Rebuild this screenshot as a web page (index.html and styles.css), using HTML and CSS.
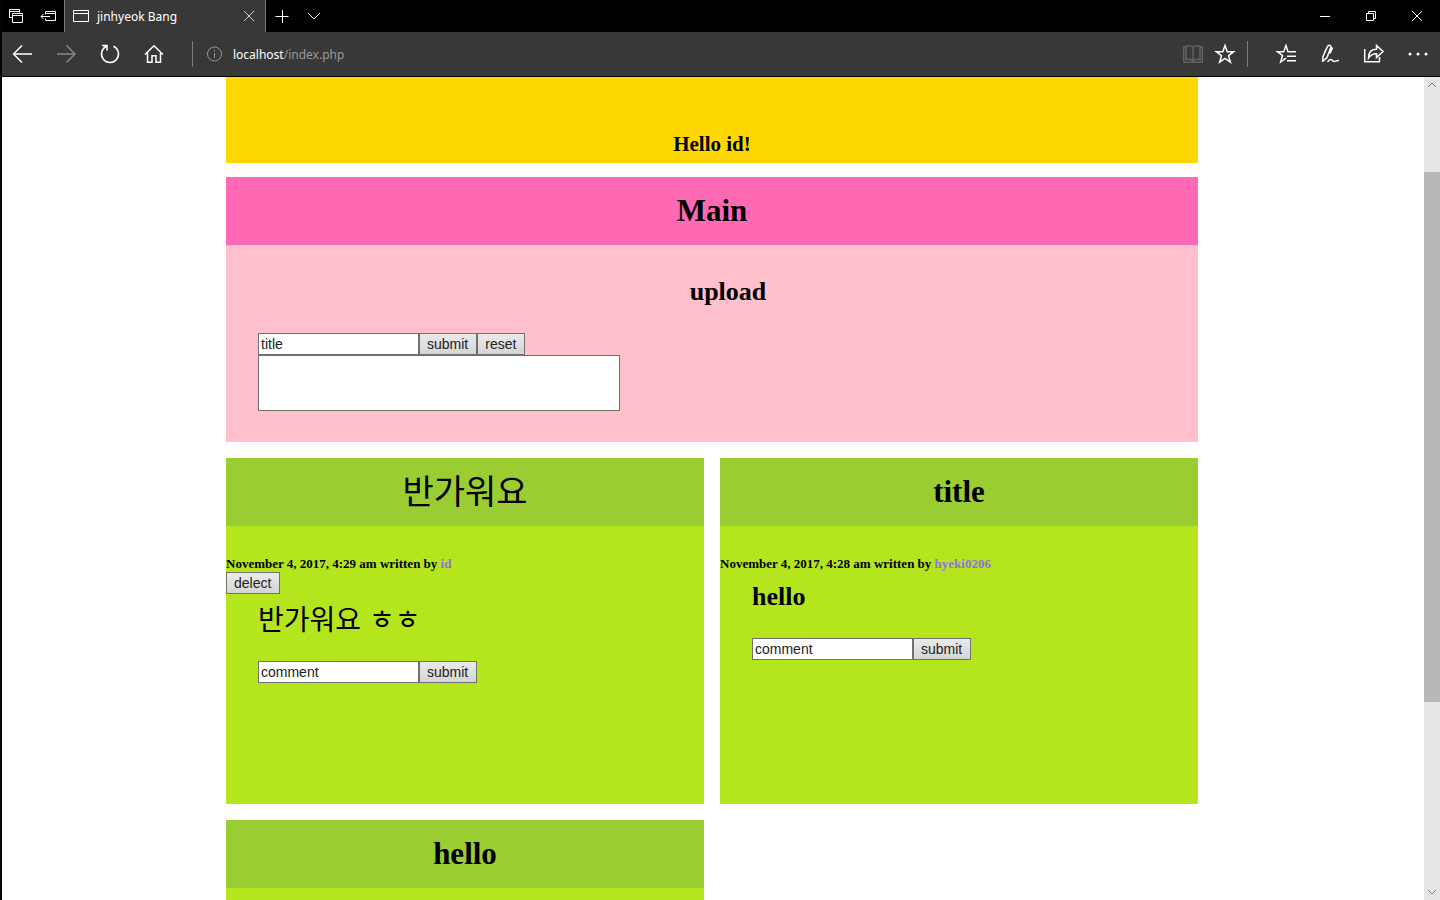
FILE: index.html
```html
<!DOCTYPE html>
<html lang="ko">
<head>
<meta charset="utf-8">
<title>jinhyeok Bang</title>
<link rel="stylesheet" href="styles.css">
</head>
<body>
<div class="window">
  <div class="tabbar">
    <button class="icon-btn" aria-label="Tabs set aside"><svg width="16" height="16" viewBox="0 0 16 16"><path d="M3 9.500H.5V1.500H10.500V4.500M.5 3.500H10.500M3.500 5.500H13.500V14.500H3.500ZM3.500 7.500H13.500"/></svg></button>
    <button class="icon-btn" aria-label="Set tabs aside"><svg width="18" height="16" viewBox="0 0 18 16"><path d="M5.500 6.500V3.500H15.500V12.500H5.500V10.500M5.500 5.500H15.500M1 8.500H10M3.500 6L1 8.500L3.500 11"/></svg></button>
    <div class="tab">
      <svg width="16" height="14" viewBox="0 0 16 14"><path d="M.5 1.500H15.500V12.500H.5ZM.5 4.500H15.500"/></svg>
      <span class="tab-title">jinhyeok Bang</span>
      <button class="tab-close" aria-label="Close tab"><svg width="12" height="12" viewBox="0 0 12 12"><path d="M1 1L11 11M11 1L1 11"/></svg></button>
    </div>
    <button class="icon-btn after-tab" aria-label="New tab"><svg width="14" height="14" viewBox="0 0 14 14"><path d="M.5 7.500H13.500M7.500 1V14"/></svg></button>
    <button class="icon-btn after-tab" aria-label="Tab previews"><svg width="14" height="14" viewBox="0 0 14 14"><path d="M1 4L7 10L13 4"/></svg></button>
    <div class="window-controls">
      <button aria-label="Minimize"><svg width="12" height="12" viewBox="0 0 12 12"><path d="M1 6.500H11"/></svg></button>
      <button aria-label="Restore"><svg width="12" height="12" viewBox="0 0 12 12"><path d="M1.500 3.500H8.500V10.500H1.500ZM3.500 3.500V1.500H10.500V8.500H8.500"/></svg></button>
      <button aria-label="Close"><svg width="12" height="12" viewBox="0 0 12 12"><path d="M1 1L11 11M11 1L1 11"/></svg></button>
    </div>
  </div>
  <div class="toolbar">
    <button aria-label="Back"><svg width="22" height="22" viewBox="0 0 22 22"><path class="bold" d="M21 11H2.500M11 2.500L2.500 11L11 19.500"/></svg></button>
    <button class="disabled" aria-label="Forward" disabled><svg width="22" height="22" viewBox="0 0 22 22"><path class="bold" d="M2 11H20M11.500 2.500L20 11L11.500 19.500"/></svg></button>
    <button aria-label="Refresh"><svg width="22" height="22" viewBox="0 0 22 22"><path class="bold" d="M14.500 3.200A8.500 8.500 0 1 1 7.500 3.200M3 2.500H8V7.500"/></svg></button>
    <button aria-label="Home"><svg width="22" height="22" viewBox="0 0 22 22"><path class="bold" d="M2 11.500L11 2.800L20 11.500M4.500 10V19.300H9V12.800H13V19.300H17.500V10"/></svg></button>
    <span class="divider divider-nav"></span>
    <svg class="info" width="16" height="16" viewBox="0 0 16 16"><circle cx="7.500" cy="8" r="7"/><path d="M7.500 7V12M7.500 4V5.500"/></svg>
    <div class="address"><span>localhost</span>/index.php</div>
    <button class="reading" aria-label="Reading view" disabled><svg width="22" height="22" viewBox="0 0 22 22"><path class="bold" d="M11 4.500C9.500 2.700 6 2.700 4 3.200V16.500C6.500 16 9.500 16 11 18C12.500 16 15.500 16 18 16.500V3.200C16 2.700 12.500 2.700 11 4.500V18M4 4H1.700V19.300H20.300V4H18"/></svg></button>
    <button class="favorite" aria-label="Add to favorites"><svg width="22" height="22" viewBox="0 0 22 22"><path class="bold" d="M11 2.500L13.200 8.700H19.700L14.500 12.700L16.400 19.200L11 15.400L5.600 19.200L7.500 12.700L2.300 8.700H8.800Z"/></svg></button>
    <span class="divider"></span>
    <div class="tools">
      <button aria-label="Hub"><svg width="22" height="22" viewBox="0 0 22 22"><path class="bold" d="M21 8.700H13L11 2.500L8.700 8.700H2.500L7.500 12.500L5.700 19L11 15.200M12 13.200H21M12 17.700H21"/></svg></button>
      <button aria-label="Add notes"><svg width="22" height="22" viewBox="0 0 22 22"><path class="bold" d="M3.500 18.800L4 13.500L8.500 3.500C9.500 1.500 12.500 2.300 11.800 4.500L8 14.500L3.500 18.800M8.500 3.500L5.500 9.500M11.500 3.500L13.300 5.200L11 10.500M8.500 19C11 15.700 12.500 16 13.800 17.800C15.300 19.700 16.500 17.300 20 17.500"/></svg></button>
      <button aria-label="Share"><svg width="22" height="22" viewBox="0 0 22 22"><path class="bold" d="M1.700 6V18.700H16.500V14M5.500 15C5.500 9.500 8 6.300 13.500 6.300V2.500L20 8.500L13.500 14.500V10.700C9.500 10.500 7.500 12 5.500 15Z"/></svg></button>
      <button aria-label="Settings and more"><svg width="22" height="22" viewBox="0 0 22 22"><g class="dots"><circle cx="3" cy="11" r="1.500"/><circle cx="11" cy="11" r="1.500"/><circle cx="19" cy="11" r="1.500"/></g></svg></button>
    </div>
  </div>
  <div class="view">
    <div class="viewport">
      <main class="page">
        <header class="greeting"><h3>Hello id!</h3></header>
        <section class="main">
          <h1 class="bar">Main</h1>
          <div class="upload">
            <h2>upload</h2>
            <form>
              <div class="row"><input type="text" value="title" aria-label="title"><button type="button">submit</button><button type="reset">reset</button></div>
              <textarea aria-label="Content"></textarea>
            </form>
          </div>
        </section>
        <div class="posts">
          <article class="post">
            <h1 class="bar korean">반가워요</h1>
            <div class="post-body">
              <h5>November 4, 2017, 4:29 am written by <a href="#">id</a></h5>
              <button type="button">delect</button>
              <h2 class="korean">반가워요 ㅎㅎ</h2>
              <form class="row"><input type="text" value="comment" aria-label="comment"><button type="button">submit</button></form>
            </div>
          </article>
          <article class="post">
            <h1 class="bar">title</h1>
            <div class="post-body">
              <h5>November 4, 2017, 4:28 am written by <a href="#">hyeki0206</a></h5>
              <h2>hello</h2>
              <form class="row"><input type="text" value="comment" aria-label="comment"><button type="button">submit</button></form>
            </div>
          </article>
          <article class="post">
            <h1 class="bar">hello</h1>
            <div class="post-body"></div>
          </article>
        </div>
      </main>
    </div>
    <div class="scrollbar">
      <svg width="16" height="16" viewBox="0 0 16 16"><path d="M4 10L8 6L12 10"/></svg>
      <div class="track"><div class="thumb"></div></div>
      <svg width="16" height="16" viewBox="0 0 16 16"><path d="M4 6L8 10L12 6"/></svg>
    </div>
  </div>
</div>
</body>
</html>
```

FILE: styles.css
```css
* { box-sizing: border-box; }
body { margin: 0; background: #000; overflow: hidden; }
h1, h2, h3, h5 { margin: 0; }
svg { display: block; flex: none; fill: none; stroke: currentColor; stroke-width: 1; }
.bold { stroke-width: 1.5; }
.dots { fill: currentColor; stroke: none; }

.window { height: 100vh; display: flex; flex-direction: column; border-left: 2px solid #050505; }
.tabbar, .toolbar { display: flex; align-items: center; flex: none; color: #fff; font-family: "Noto Sans", "Open Sans", sans-serif; font-size: 12px; }
.tabbar button, .toolbar button { border: 0; padding: 0; background: none; color: inherit; display: flex; align-items: center; justify-content: center; }
.tabbar { height: 32px; background: #000; }
.tabbar .icon-btn { width: 32px; height: 32px; padding-right: 2px; }
.tabbar .after-tab { padding: 0; }
.tab { width: 202px; height: 32px; margin-left: -2px; display: flex; align-items: center; gap: 8px; padding: 0 10px 0 8px; background: #383838; border: solid #7a7a7a; border-width: 0 1px; }
.tab-title { flex: 1; }
.tabbar .tab-close { color: #ccc; }
.window-controls { margin-left: auto; display: flex; }
.tabbar .window-controls button { width: 46px; height: 32px; }

.toolbar { height: 45px; background: #383838; border-bottom: 1px solid #000; }
.toolbar button { width: 44px; height: 44px; padding-right: 4px; }
.toolbar .disabled { color: #858585; }
.divider { width: 1px; height: 26px; background: #7a7a7a; }
.divider-nav { margin: 0 14px; }
.info { color: #999; }
.address { flex: 1; padding-left: 10px; color: #999; }
.address span { color: #fff; }
.toolbar .reading { color: #626262; width: 32px; padding: 0; }
.toolbar .favorite { width: 32px; padding: 0; margin-right: 6px; }
.tools { display: flex; padding-left: 16px; }
.toolbar .tools button { padding: 0; }

.view { flex: 1; min-height: 0; display: flex; background: #fff; }
.viewport { flex: 1; overflow: hidden; padding-right: 2px; font-family: "Liberation Serif", "Noto Sans CJK KR", serif; color: #000; }
.page { max-width: 972px; margin: 0 auto; }
.greeting { background: #ffd700; padding: 55px 0 7px; text-align: center; }
.greeting h3 { font-size: 21px; line-height: 24px; }
.main { margin: 14px 0 16px; background: #ffc0cb; }
.bar { font-size: 31px; line-height: 36px; padding: 16px 0; text-align: center; }
.main .bar { background: #ff69b4; }
.post .bar { background: #9acd32; }
.bar.korean { font-size: 34px; line-height: 34px; padding: 15px 0 19px; }
.korean { font-family: "Noto Sans CJK KR", sans-serif; font-weight: 400; }
.upload { padding: 32px 0 31px 32px; }
.upload h2, .post h2 { font-size: 26px; line-height: 30px; }
.upload h2 { text-align: center; margin-bottom: 26px; }
.row { display: flex; }
.page input, .page button, .page textarea { height: 22px; border: 1px solid #707070; border-radius: 0; margin: 0; font: 14px/18px "Liberation Sans", sans-serif; color: #222; }
.page input { width: 161px; padding: 0 2px; background: #fff; }
.page button { padding: 0 8px 0 7px; background: linear-gradient(#eaeaea, #d5d5d5); }
.page textarea { display: block; width: 362px; height: 56px; background: #fff; resize: none; }
.posts { display: grid; grid-template-columns: 1fr 1fr; gap: 16px; }
.post { height: 346px; background: #b5e61d; }
.post-body { padding-top: 29px; }
.post h5 { font-size: 13px; line-height: 17px; }
.post a { color: #9370db; text-decoration: none; }
.post h2 { margin: 10px 0 26px 32px; }
.post h2.korean { font-size: 28px; margin: 9px 0 28px 32px; }
.post .row { margin-left: 32px; }
.post-body > button { display: block; }

.scrollbar { width: 16px; display: flex; flex-direction: column; background: #e6e6e6; color: #777; }
.track { flex: 1; min-height: 0; padding-top: 79px; }
.thumb { height: 530px; max-height: 90%; background: #b8b8b8; }
```
